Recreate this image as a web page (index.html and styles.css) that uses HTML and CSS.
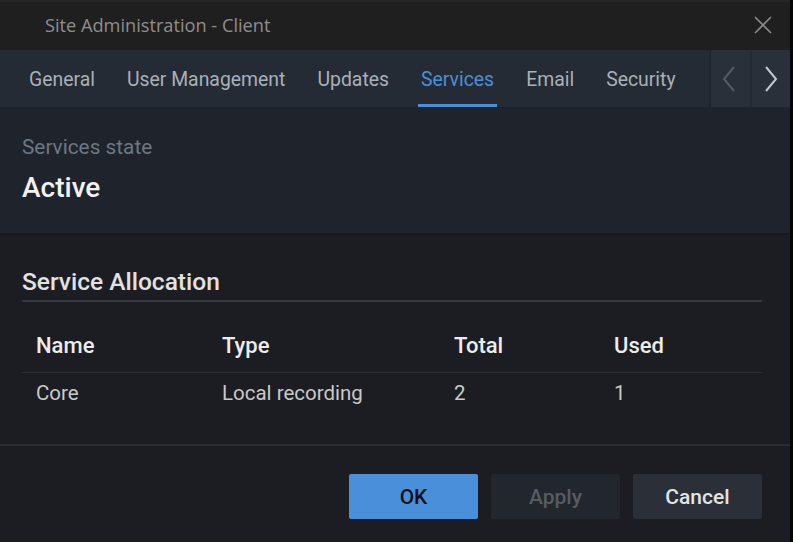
FILE: index.html
```html
<!DOCTYPE html>
<html lang="en">
<head>
<meta charset="utf-8">
<title>Site Administration - Client</title>
<link rel="stylesheet" href="styles.css">
</head>
<body>
<div class="dialog">
  <header class="titlebar">
    <span class="title">Site Administration - Client</span>
    <button class="close" aria-label="Close">
      <svg width="18" height="18" viewBox="0 0 18 18"><path d="M1 1L17 17M17 1L1 17" stroke="currentColor" stroke-width="1.6" fill="none"/></svg>
    </button>
  </header>
  <nav class="tabs">
    <div class="tablist">
      <span class="tab">General</span>
      <span class="tab">User Management</span>
      <span class="tab">Updates</span>
      <span class="tab active">Services</span>
      <span class="tab">Email</span>
      <span class="tab">Security</span>
    </div>
    <div class="scroller">
      <button class="arrow prev" aria-label="Previous">
        <svg width="14" height="26" viewBox="0 0 14 26"><path d="M12 1L2 13L12 25" stroke="currentColor" stroke-width="2" fill="none"/></svg>
      </button>
      <button class="arrow next" aria-label="Next">
        <svg width="14" height="26" viewBox="0 0 14 26"><path d="M2 1L12 13L2 25" stroke="currentColor" stroke-width="2" fill="none"/></svg>
      </button>
    </div>
  </nav>
  <section class="state">
    <div class="state-label">Services state</div>
    <div class="state-value">Active</div>
  </section>
  <main class="content">
    <h2 class="section-title">Service Allocation</h2>
    <table class="alloc">
      <colgroup>
        <col class="c-name"><col class="c-type"><col class="c-total"><col class="c-used">
      </colgroup>
      <thead>
        <tr><th>Name</th><th>Type</th><th>Total</th><th>Used</th></tr>
      </thead>
      <tbody>
        <tr><td>Core</td><td>Local recording</td><td>2</td><td>1</td></tr>
      </tbody>
    </table>
  </main>
  <footer class="actions">
    <button class="btn primary">OK</button>
    <button class="btn disabled">Apply</button>
    <button class="btn secondary">Cancel</button>
  </footer>
</div>
</body>
</html>
```
FILE: styles.css
```css
* { box-sizing: border-box; }
html, body { margin: 0; padding: 0; }
body {
  width: 793px;
  height: 542px;
  overflow: hidden;
  background: #1b1d22;
  font-family: Roboto, "Noto Sans", sans-serif;
}
.dialog {
  width: 793px;
  height: 542px;
  border-right: 3px solid #050505;
  display: flex;
  flex-direction: column;
  background: #1b1d22;
}
.titlebar {
  height: 50px;
  flex: none;
  background: #1f1f1f;
  border-top: 2px solid #262626;
  display: flex;
  align-items: center;
  justify-content: space-between;
  padding: 0 18px 2px 45px;
}
.title {
  font-family: "Open Sans", sans-serif;
  font-size: 18.2px;
  color: #8e8e8e;
}
.close {
  background: none;
  border: 0;
  padding: 0;
  color: #8a8a8a;
  display: flex;
}
.tabs {
  height: 57px;
  flex: none;
  background: #252b35;
  display: flex;
  justify-content: space-between;
}
.tablist {
  display: flex;
  align-items: center;
  gap: 32px;
  padding-left: 29px;
}
.tab {
  position: relative;
  font-size: 19.4px;
  color: #a9b0b9;
  line-height: 57px;
  padding-top: 2px;
}
.tab.active { color: #4a8fd8; }
.tab.active::after {
  content: "";
  position: absolute;
  left: -3px;
  right: -3px;
  bottom: 1px;
  height: 3px;
  background: #4a8fd8;
}
.scroller {
  display: flex;
  border-left: 2px solid #20252d;
}
.arrow {
  width: 39px;
  height: 57px;
  border: 0;
  padding: 0;
  background: #2a303a;
  display: flex;
  align-items: center;
  justify-content: center;
}
.arrow.prev { color: #535a64; padding-right: 4px; }
.arrow.next { color: #c2c7cd; border-left: 2px solid #252a33; width: 40px; }
.state {
  height: 128px;
  flex: none;
  background: #1f232b;
  border-bottom: 2px solid #17191d;
  padding: 28px 22px 0;
}
.state-label {
  font-size: 20.8px;
  line-height: 24px;
  color: #6d7784;
}
.state-value {
  margin-top: 13px;
  font-size: 28px;
  line-height: 32px;
  font-weight: 500;
  color: #f2f2f2;
}
.content {
  flex: 1;
  padding: 33px 28px 0 22px;
}
.section-title {
  margin: 0;
  font-size: 24.5px;
  line-height: 28px;
  font-weight: 500;
  color: #e2e2e2;
  padding-bottom: 4px;
  border-bottom: 2px solid #353a42;
}
.alloc {
  width: 100%;
  margin-top: 21px;
  border-collapse: collapse;
  table-layout: fixed;
}
.c-name { width: 186px; }
.c-type { width: 232px; }
.c-total { width: 160px; }
.alloc th, .alloc td {
  text-align: left;
  padding-left: 14px;
  line-height: 24px;
}
.alloc th {
  font-size: 22px;
  font-weight: 500;
  color: #ececec;
  padding-top: 11px;
  padding-bottom: 14px;
  border-bottom: 1px solid #2a2d33;
}
.alloc td {
  font-size: 20.5px;
  color: #c9c9c9;
  padding-top: 8px;
}
.actions {
  height: 98px;
  flex: none;
  border-top: 2px solid #2a2d33;
  padding: 28px 28px 0 0;
  display: flex;
  justify-content: flex-end;
  align-items: flex-start;
  gap: 13px;
}
.btn {
  width: 129px;
  height: 45px;
  border: 0;
  border-radius: 2px;
  font-family: Roboto, sans-serif;
  font-size: 21px;
  font-weight: 500;
}
.btn.primary { background: #4a8fd9; color: #101214; }
.btn.disabled { background: #22262d; color: #575c64; }
.btn.secondary { background: #2a2f38; color: #e4e4e4; }
```
